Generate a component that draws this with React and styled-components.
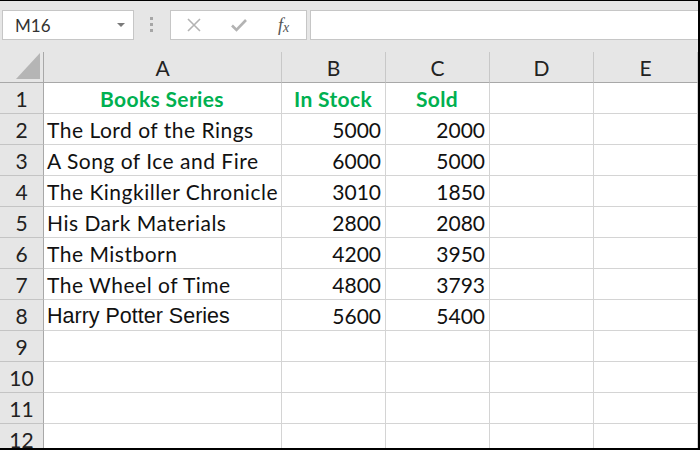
import React from "react";
import styled, { createGlobalStyle } from "styled-components";

const GlobalStyle = createGlobalStyle`
    body {
        margin: 0;
        background: #ffffff;
    }
`;

const calibri = `"Lato", "Open Sans", "Liberation Sans", sans-serif`;

const columns = ["A", "B", "C", "D", "E"];

const books = [
    ["The Lord of the Rings", 5000, 2000],
    ["A Song of Ice and Fire", 6000, 5000],
    ["The Kingkiller Chronicle", 3010, 1850],
    ["His Dark Materials", 2800, 2080],
    ["The Mistborn", 4200, 3950],
    ["The Wheel of Time", 4800, 3793],
    ["Harry Potter Series", 5600, 5400, true],
];

const App = () => {
    const rows = [];
    rows.push(
        <React.Fragment key="r1">
            <RowHead>1</RowHead>
            <Cell $align="center" $header>Books Series</Cell>
            <Cell $align="center" $header>In Stock</Cell>
            <Cell $align="center" $header>Sold</Cell>
            <Cell />
            <Cell />
        </React.Fragment>
    );
    books.forEach((b, i) => {
        rows.push(
            <React.Fragment key={"b" + i}>
                <RowHead>{i + 2}</RowHead>
                <Cell $text $arial={b[3]}>{b[0]}</Cell>
                <Cell $align="right">{b[1]}</Cell>
                <Cell $align="right">{b[2]}</Cell>
                <Cell />
                <Cell />
            </React.Fragment>
        );
    });
    for (let n = 9; n <= 12; n++) {
        rows.push(
            <React.Fragment key={"e" + n}>
                <RowHead>{n}</RowHead>
                <Cell />
                <Cell />
                <Cell />
                <Cell />
                <Cell />
            </React.Fragment>
        );
    }

    return (
        <Frame>
            <GlobalStyle />
            <FormulaBar>
                <NameBox>
                    <span>M16</span>
                    <DropArrow />
                </NameBox>
                <Grip>
                    <i />
                    <i />
                    <i />
                </Grip>
                <FxBox>
                    <svg width="16" height="16" viewBox="0 0 16 16">
                        <path d="M2 2 L14 14 M14 2 L2 14" stroke="#b3b3b3" strokeWidth="1.6" fill="none" />
                    </svg>
                    <svg width="18" height="16" viewBox="0 0 18 16">
                        <path d="M2 8.5 L6.5 13 L16 3" stroke="#b3b3b3" strokeWidth="2.6" fill="none" />
                    </svg>
                    <FxLabel>
                        f<sub>x</sub>
                    </FxLabel>
                </FxBox>
                <FormulaInput />
            </FormulaBar>
            <Sheet>
                <Corner>
                    <svg width="24" height="26" viewBox="0 0 24 26">
                        <polygon points="24,0 24,26 0,26" fill="#b5b5b5" />
                    </svg>
                </Corner>
                {columns.map((c) => (
                    <ColHead key={c}>{c}</ColHead>
                ))}
                {rows}
            </Sheet>
        </Frame>
    );
};

const Frame = styled.div`
    width: 700px;
    height: 450px;
    box-sizing: border-box;
    border-top: 1px solid #000;
    border-right: 2px solid #000;
    border-bottom: 2px solid #000;
    background: #e6e6e6;
    overflow: hidden;
    display: flex;
    flex-direction: column;
`;

const FormulaBar = styled.div`
    height: 51px;
    flex-shrink: 0;
    box-sizing: border-box;
    padding: 9px 0 0 2px;
    display: flex;
    align-items: flex-start;
`;

const NameBox = styled.div`
    width: 132px;
    height: 30px;
    box-sizing: border-box;
    border: 1px solid #c6c6c6;
    background: #fff;
    display: flex;
    align-items: center;
    justify-content: space-between;
    padding: 0 8px 0 12px;
    font-family: ${calibri};
    font-size: 17px;
    color: #333;
`;

const DropArrow = styled.span`
    width: 0;
    height: 0;
    border-left: 4px solid transparent;
    border-right: 4px solid transparent;
    border-top: 4px solid #7a7a7a;
`;

const Grip = styled.div`
    margin: 7px 17px 0 16px;
    display: flex;
    flex-direction: column;
    gap: 3px;
    & i {
        width: 3px;
        height: 3px;
        background: #a6a6a6;
    }
`;

const FxBox = styled.div`
    width: 137px;
    height: 30px;
    box-sizing: border-box;
    border: 1px solid #c6c6c6;
    background: #fff;
    display: flex;
    align-items: center;
    padding-left: 15px;
    gap: 28px;
`;

const FxLabel = styled.span`
    font-family: "Liberation Serif", serif;
    font-style: italic;
    font-size: 18px;
    color: #555;
    margin-left: 2px;
    & sub {
        font-size: 14px;
        vertical-align: -1px;
    }
`;

const FormulaInput = styled.div`
    flex: 1;
    height: 30px;
    box-sizing: border-box;
    margin-left: 3px;
    border: 1px solid #c6c6c6;
    border-right: none;
    background: #fff;
`;

const Sheet = styled.div`
    display: grid;
    grid-template-columns: 44px 238px repeat(4, 104px);
    grid-template-rows: 31px;
    grid-auto-rows: 31px;
    background: #fff;
`;

const Corner = styled.div`
    background: #e6e6e6;
    box-sizing: border-box;
    border-right: 1px solid #a8a8a8;
    border-bottom: 1px solid #a8a8a8;
    display: flex;
    align-items: flex-end;
    justify-content: flex-end;
    padding: 0 3px 3px 0;
`;

const ColHead = styled.div`
    background: #e6e6e6;
    box-sizing: border-box;
    border-right: 1px solid #c8c8c8;
    border-bottom: 1px solid #a8a8a8;
    display: flex;
    align-items: center;
    justify-content: center;
    font-family: ${calibri};
    font-size: 21px;
    color: #222;
`;

const RowHead = styled.div`
    background: #e6e6e6;
    box-sizing: border-box;
    border-right: 1px solid #a8a8a8;
    border-bottom: 1px solid #c4c4c4;
    display: flex;
    align-items: center;
    justify-content: center;
    font-family: ${calibri};
    font-size: 21px;
    color: #222;
`;

const Cell = styled.div`
    box-sizing: border-box;
    border-right: 1px solid #d4d4d4;
    border-bottom: 1px solid #d4d4d4;
    display: flex;
    align-items: center;
    justify-content: ${(p) =>
        p.$align === "right" ? "flex-end" : p.$align === "center" ? "center" : "flex-start"};
    padding: ${(p) => (p.$arial ? "2px 4px 0 3px" : "0 4px 0 3px")};
    white-space: nowrap;
    overflow: visible;
    font-family: ${(p) => (p.$arial ? `"Liberation Sans", Arial, sans-serif` : calibri)};
    font-size: ${(p) => (p.$arial ? "21.5px" : "21px")};
    letter-spacing: ${(p) => (p.$arial ? "0" : p.$header ? "0.35px" : p.$text ? "0.5px" : "0")};
    font-weight: ${(p) => (p.$header ? 700 : 400)};
    color: ${(p) => (p.$header ? "#00b050" : "#111")};
`;

export default App;
